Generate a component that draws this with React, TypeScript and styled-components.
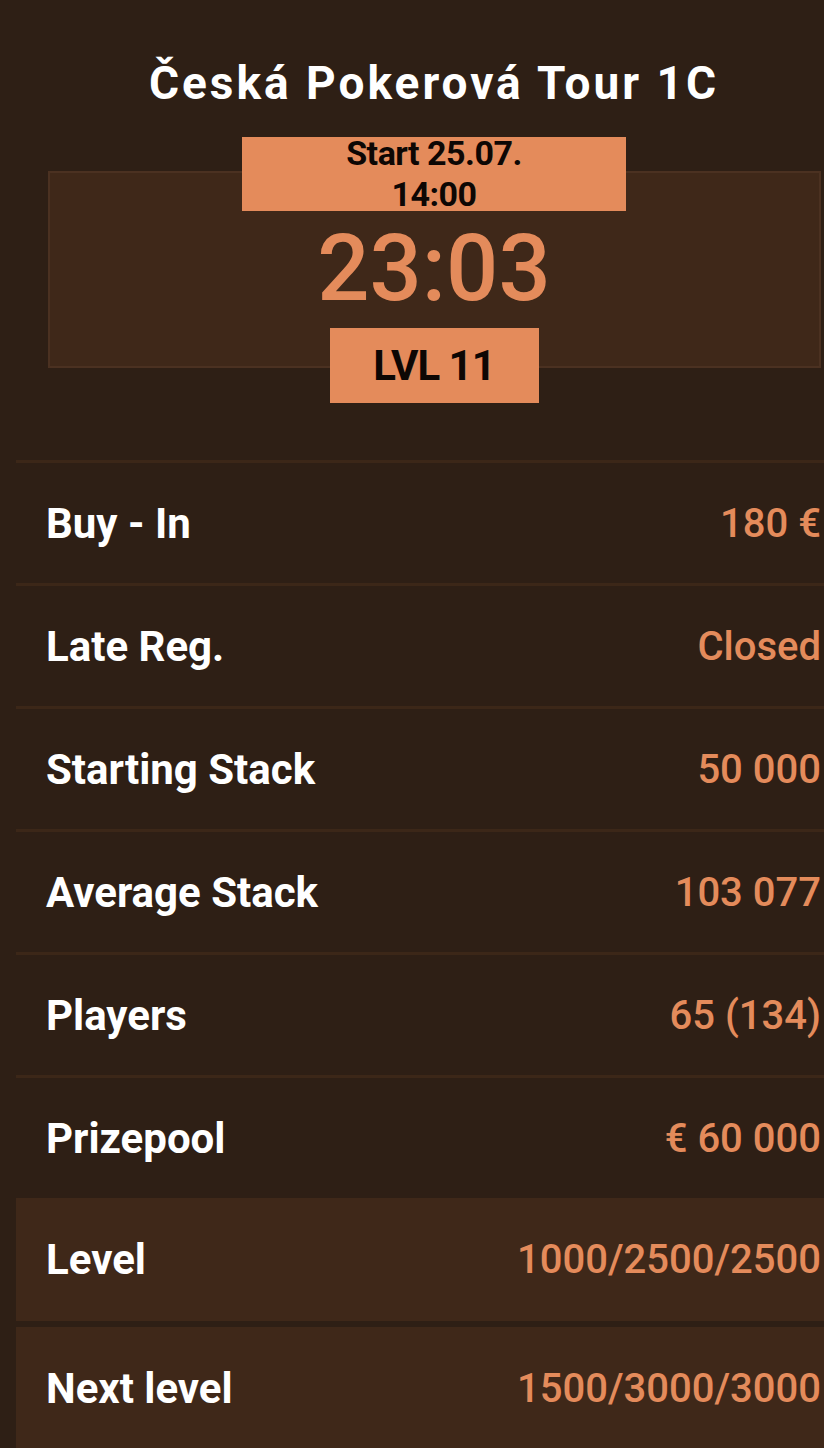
import React from 'react';
import styled, {createGlobalStyle} from 'styled-components';

const Global = createGlobalStyle`
  html, body {
    margin: 0;
    padding: 0;
    background: #2e1f15;
    overflow: hidden;
  }
  body {
    font-family: Roboto, "Liberation Sans", sans-serif;
  }
`

const Page = styled.div`
  width: 868px;
  min-height: 1448px;
  background: #2e1f15;
  display: flex;
  flex-direction: column;
  align-items: center;
`

const Title = styled.h1`
  margin: 57px 0 0;
  color: #fff;
  font-size: 46px;
  font-weight: 700;
  letter-spacing: 3px;
  line-height: 53px;
  text-align: center;
`

const TimerBox = styled.div`
  margin-top: 61px;
  width: 773px;
  box-sizing: border-box;
  background: #3f2819;
  border: 2px solid #4b3121;
  display: flex;
  flex-direction: column;
  align-items: center;
`

const Badge = styled.div<{ $w: number; $top?: boolean }>`
  flex-shrink: 0;
  width: ${p => p.$w}px;
  height: ${p => (p.$top ? 74 : 75)}px;
  background: #e48b5b;
  color: #0d0704;
  display: flex;
  align-items: center;
  justify-content: center;
  text-align: center;
  font-weight: 700;
  margin-top: ${p => (p.$top ? '-36px' : '13px')};
  margin-bottom: ${p => (p.$top ? '0' : '-37px')};
`

const StartText = styled.div`
  width: 200px;
  font-size: 34px;
  line-height: 41px;
  letter-spacing: -0.5px;
`

const LvlText = styled.div`
  font-size: 42px;
  letter-spacing: -1px;
`

const Clock = styled.div`
  margin-top: 12px;
  color: #e48b5b;
  font-size: 92px;
  font-weight: 500;
  line-height: 92px;
`

const Table = styled.div`
  margin-top: 92px;
  width: 836px;
  display: flex;
  flex-direction: column;
`

const LevelGroup = styled.div`
  display: flex;
  flex-direction: column;
  gap: 6px;
`

const Row = styled.div<{ $hl?: boolean }>`
  height: 123px;
  box-sizing: border-box;
  padding: 0 31px 0 30px;
  display: flex;
  align-items: center;
  justify-content: space-between;
  border-top: ${p => (p.$hl ? 'none' : '3px solid #3c2718')};
  background: ${p => (p.$hl ? '#3f2819' : 'transparent')};
`

const Label = styled.span`
  color: #fff;
  font-size: 42px;
  font-weight: 700;
`

const Value = styled.span`
  color: #e48b5b;
  font-size: 40px;
  font-weight: 500;
`

const rows = [
  ['Buy - In', '180 €'],
  ['Late Reg.', 'Closed'],
  ['Starting Stack', '50 000'],
  ['Average Stack', '103 077'],
  ['Players', '65 (134)'],
  ['Prizepool', '€ 60 000'],
]

const levels = [
  ['Level', '1000/2500/2500'],
  ['Next level', '1500/3000/3000'],
]

export default function App() {
  return (
    <Page>
      <Global />
      <Title>Česká Pokerová Tour 1C</Title>
      <TimerBox>
        <Badge $w={384} $top>
          <StartText>Start 25.07. 14:00</StartText>
        </Badge>
        <Clock>23:03</Clock>
        <Badge $w={209}>
          <LvlText>LVL 11</LvlText>
        </Badge>
      </TimerBox>
      <Table>
        {rows.map(([l, v]) => (
          <Row key={l}>
            <Label>{l}</Label>
            <Value>{v}</Value>
          </Row>
        ))}
        <LevelGroup>
          {levels.map(([l, v]) => (
            <Row key={l} $hl>
              <Label>{l}</Label>
              <Value>{v}</Value>
            </Row>
          ))}
        </LevelGroup>
      </Table>
    </Page>
  );
}
